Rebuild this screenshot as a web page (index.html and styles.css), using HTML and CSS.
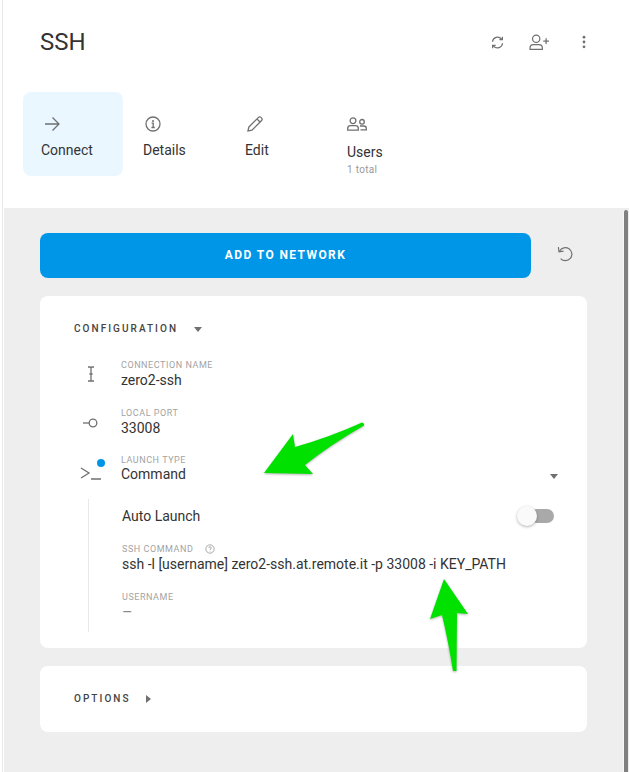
FILE: index.html
```html
<!DOCTYPE html>
<html lang="en">
<head>
<meta charset="utf-8">
<title>SSH</title>
<link rel="stylesheet" href="styles.css">
</head>
<body>
<div class="app">
  <header class="head">
    <div class="titlebar">
      <h1 class="title">SSH</h1>
      <div class="actions">
        <svg class="ic a-refresh" viewBox="0 0 16 16"><path d="M2.600 7.200A5.500 5.500 0 0 1 12.200 4.200L13 5M13.400 8.800A5.500 5.500 0 0 1 3.800 11.800L3 11"/><path d="M13.200 1.800V5H10M2.800 14.200V11H6"/></svg>
        <svg class="ic a-adduser" viewBox="0 0 22 18"><circle cx="7.500" cy="5" r="3.900"/><path d="M1 16.200V14.600C1 12.600 2.600 11.200 4.600 11.200H10.400C12.400 11.200 14 12.600 14 14.600V16.200Z"/><path d="M15 7.500H21M18 4.500V10.500"/></svg>
        <svg class="ic a-more" viewBox="0 0 4 16"><circle class="solid" cx="2" cy="2.500" r="1.600"/><circle class="solid" cx="2" cy="8" r="1.600"/><circle class="solid" cx="2" cy="13.500" r="1.600"/></svg>
      </div>
    </div>
    <nav class="tabs">
      <a class="tab active">
        <svg class="ic tab-ic" viewBox="0 0 16 16"><path d="M1 8H15M8.500 1.500L15 8L8.500 14.500"/></svg>
        <span class="tab-label">Connect</span>
      </a>
      <a class="tab">
        <svg class="ic tab-ic tab-ic-left" viewBox="0 0 16 16"><circle cx="8" cy="8" r="7"/><circle class="solid" cx="8" cy="4.900" r="1"/><path d="M6.600 7.200H8.200V11.400M6.400 11.500H9.800"/></svg>
        <span class="tab-label">Details</span>
      </a>
      <a class="tab">
        <svg class="ic tab-ic tab-ic-left" viewBox="0 0 16 16"><path d="M1 15L1.800 11L11.500 1.400C12.200 .7 13.200 .7 13.900 1.400L14.600 2.100C15.300 2.800 15.300 3.800 14.600 4.500L5 14.200Z"/><path d="M10 3L13 6"/></svg>
        <span class="tab-label">Edit</span>
      </a>
      <a class="tab tab-users">
        <svg class="ic tab-ic-wide" viewBox="0 0 20 14"><circle cx="6" cy="3.700" r="2.900"/><path d="M.7 13.200V11.400C.7 9.800 2 8.700 3.400 8.700H8.600C10 8.700 11.300 9.800 11.300 11.400V13.200Z"/><circle cx="15" cy="4.800" r="2.300"/><path d="M13 9H16.800C18.200 9 19.300 10 19.300 11.300V12.800H13.500"/></svg>
        <span class="tab-label">Users</span>
        <span class="tab-sub">1 total</span>
      </a>
    </nav>
  </header>
  <main class="main">
    <div class="cta">
      <button class="btn">ADD TO NETWORK</button>
      <svg class="ic reset" viewBox="0 0 16 16"><path d="M2.600 5.200A6.500 6.500 0 1 1 3.600 12.600"/><path d="M1.400 1.200L2 5.800L6.600 5.200"/></svg>
    </div>
    <section class="card config">
      <div class="card-head"><span class="card-title">CONFIGURATION</span><span class="caret-down"></span></div>
      <div class="field">
        <span class="field-ic"><svg class="ic f-cursor" viewBox="0 0 8 16"><path d="M1 1H3C3.600 1 4 1.400 4 2V14C4 14.600 3.600 15 3 15H1M7 1H5C4.400 1 4 1.400 4 2M7 15H5C4.400 15 4 14.600 4 14M2.400 8H5.600"/></svg></span>
        <div class="field-body"><div class="label">CONNECTION NAME</div><div class="value">zero2-ssh</div></div>
      </div>
      <div class="field field-port">
        <span class="field-ic"><svg class="ic f-port" viewBox="0 0 15 10"><circle cx="10" cy="5" r="3.800"/><path d="M0 5H6"/></svg></span>
        <div class="field-body"><div class="label">LOCAL PORT</div><div class="value">33008</div></div>
      </div>
      <div class="field field-type">
        <span class="field-ic"><svg class="ic f-term" viewBox="0 0 22 14"><path d="M1 2L9 7L1 12M11 13H21"/></svg><span class="dot"></span></span>
        <div class="field-body"><div class="label">LAUNCH TYPE</div><div class="value">Command</div></div>
        <span class="caret-down select-caret"></span>
      </div>
      <div class="sub">
        <div class="auto"><span class="auto-label">Auto Launch</span><span class="switch"><span class="knob"></span></span></div>
        <div class="sub-field">
          <div class="label">SSH COMMAND <svg class="ic help" viewBox="0 0 12 12"><circle cx="6" cy="6" r="5"/><path d="M4.400 4.700C4.500 3.800 5.200 3.300 6 3.300C6.900 3.300 7.600 3.900 7.600 4.700C7.600 5.800 6 5.800 6 7.200M6 8.300V9"/></svg></div>
          <div class="value">ssh -l [username] zero2-ssh.at.remote.it -p 33008 -i KEY_PATH</div>
        </div>
        <div class="sub-field">
          <div class="label">USERNAME</div>
          <div class="value muted">–</div>
        </div>
      </div>
    </section>
    <section class="card options">
      <span class="card-title">OPTIONS</span><span class="caret-right"></span>
    </section>
  </main>
  <div class="scrollbar"></div>
  <svg class="marks" viewBox="0 0 629 772">
    <path class="mark" d="M264 473L293 434L295 447Q330 437 362 422.500Q364.500 423 364 425.500Q330 445 305 465L313 474Z"/>
    <path class="mark" d="M444 579L468 614L457 613L456.500 671H453Q448 640 442 615L430 619Z"/>
  </svg>
</div>
</body>
</html>
```
FILE: styles.css
```css
* { box-sizing: border-box; }
html, body { margin: 0; height: 100%; overflow: hidden; }
body { font-family: Roboto, "Liberation Sans", sans-serif; color: #333; background: #fff; }
.app { position: relative; width: 629px; height: 772px; display: flex; flex-direction: column; padding-left: 4px; background: #fff; }
.app::before { content: ""; position: absolute; left: 2px; top: 0; width: 1px; height: 100%; background: #e8e8e8; }

.ic { fill: none; stroke: #707070; stroke-width: 1.3; display: block; overflow: visible; }
.ic .solid { fill: #707070; stroke: none; }

.head { height: 204px; flex: none; }
.titlebar { height: 92px; display: flex; align-items: center; justify-content: space-between; padding: 0 43px 8px 36px; }
.title { margin: 0; font-size: 24px; font-weight: 400; color: #333; }
.actions { display: flex; align-items: center; }
.a-refresh { width: 15px; height: 15px; margin-right: 24px; }
.a-adduser { width: 21px; height: 17px; margin-right: 32px; }
.a-more { width: 4px; height: 14px; }

.tabs { display: flex; padding-left: 19px; }
.tab { width: 100px; height: 84px; margin-right: 2px; padding: 24px 18px 0; border-radius: 8px; display: flex; flex-direction: column; align-items: flex-start; }
.tab.active { background: #ebf7ff; }
.tab-ic { width: 16px; height: 16px; margin-left: 3px; }
.tab-ic-left { margin-left: 2px; }
.tab-ic-wide { width: 20px; height: 14px; margin: 1px 0 0 0; }
.tab-label { font-size: 14px; line-height: 16px; margin-top: 10px; color: #333; }
.tab-users .tab-label { margin-top: 13px; }
.tab-sub { font-size: 10px; line-height: 12px; letter-spacing: .3px; color: #999; margin-top: 4px; }

.main { flex: 1; background: #eee; padding: 25px 42px 0 36px; margin-top: 4px; }
.cta { display: flex; align-items: center; height: 45px; margin-bottom: 18px; position: relative; }
.btn { flex: none; width: 491px; height: 45px; border: 0; border-radius: 8px; background: #0096e7; color: #fff; font: 700 12px Roboto, sans-serif; letter-spacing: 1.4px; padding: 0 0 1px; }
.reset { width: 16px; height: 16px; margin: -3px 0 0 26px; stroke-width: 1.2; }

.card { width: 547px; background: #fff; border-radius: 8px; }
.config { height: 352px; padding: 26px 33px 0 34px; margin-bottom: 18px; }
.options { height: 66px; padding: 26px 34px 0; display: flex; align-items: flex-start; }
.card-head { display: flex; align-items: center; height: 14px; margin-bottom: 23px; }
.card-title { font-size: 10px; line-height: 14px; font-weight: 500; letter-spacing: 2.05px; color: #444; }
.caret-down { width: 0; height: 0; border: 4.500px solid transparent; border-top: 5px solid #707070; border-bottom: 0; margin-left: 16px; }
.caret-right { width: 0; height: 0; border: 4.500px solid transparent; border-left: 5px solid #707070; border-right: 0; margin: 2.500px 0 0 15px; }

.field { display: flex; height: 48px; align-items: flex-start; position: relative; }
.field-port { height: 47px; }
.field-type { height: 45px; }
.field-ic { width: 47px; height: 30px; flex: none; position: relative; display: flex; align-items: center; justify-content: center; padding-right: 13px; }
.f-cursor { width: 8px; height: 16px; }
.f-port { width: 15px; height: 10px; margin-right: 1px; margin-top: 2px; }
.f-term { width: 22px; height: 14px; margin: 8px 0 0 0; }
.dot { position: absolute; left: 23px; top: 5px; width: 8px; height: 8px; border-radius: 50%; background: #0096e7; }
.field-body { flex: 1; }
.label { font-size: 9px; line-height: 12px; letter-spacing: .55px; color: #a3a3a3; font-weight: 400; display: flex; align-items: center; }
.value { font-size: 14px; line-height: 17px; color: #333; margin-top: 1px; }
.field-type .value { margin-top: 0; }
.select-caret { position: absolute; right: -4px; top: 20px; margin: 0; }

.sub { margin-left: 14px; height: 133px; border-left: 1px solid #e8e8e8; padding: 7px 0 0 33px; }
.auto { display: flex; align-items: center; justify-content: space-between; height: 20px; margin-bottom: 17px; }
.auto-label { font-size: 14px; color: #333; }
.switch { position: relative; width: 24px; height: 14px; border-radius: 7px; background: #a9a9a9; margin-right: 0; }
.knob { position: absolute; left: -13px; top: -3px; width: 20px; height: 20px; border-radius: 50%; background: #fafafa; box-shadow: 0 1px 3px rgba(0,0,0,.3); }
.sub-field { margin-bottom: 18px; }
.sub-field .label { margin-bottom: 1px; }
.sub-field .value { margin-top: 0; }
.help { width: 10px; height: 10px; margin-left: 12px; stroke: #999; stroke-width: 1; }
.sub-field .muted { color: #888; font-size: 16px; margin-top: 0; }

.scrollbar { position: absolute; right: 1px; top: 210px; bottom: 0; width: 4px; background: #808080; box-shadow: -1px 0 0 #f6f6f6; border-radius: 2px 2px 0 0; }
.marks { position: absolute; inset: 0; width: 100%; height: 100%; pointer-events: none; }
.mark { fill: #00e100; filter: drop-shadow(0 1px 1px rgba(0,0,0,.3)); }
```
